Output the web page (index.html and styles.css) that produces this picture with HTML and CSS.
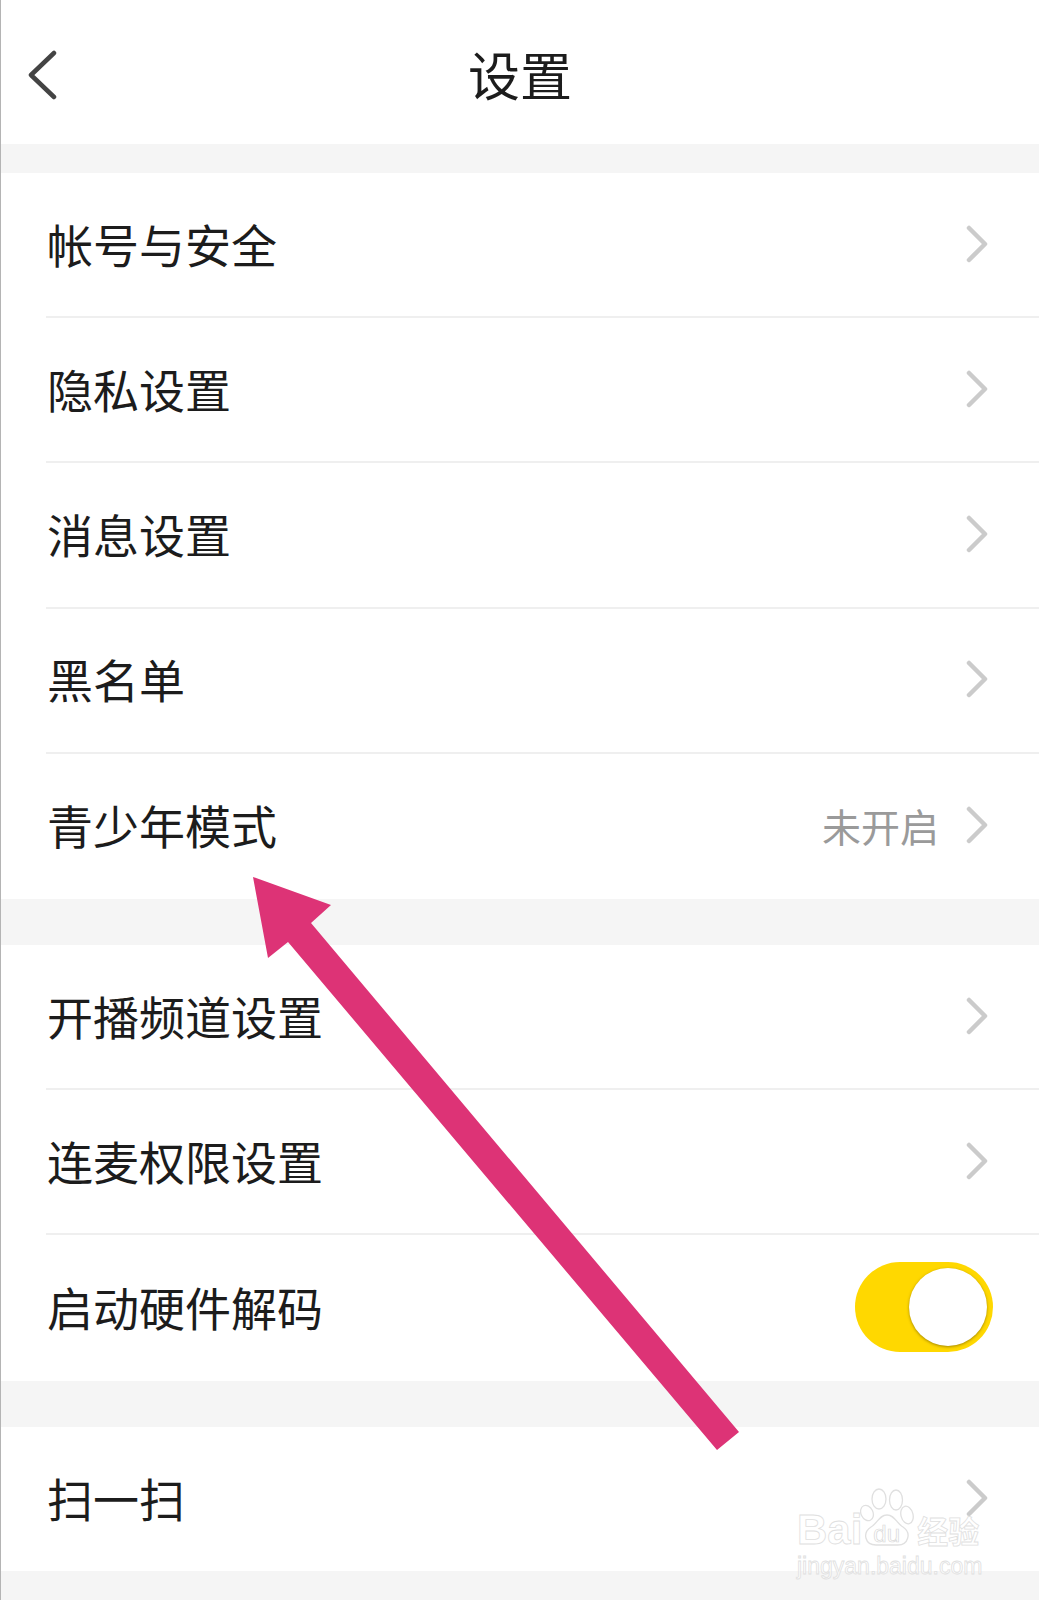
FILE: index.html
```html
<!DOCTYPE html>
<html lang="zh-CN">
<head>
  <meta charset="UTF-8" />
  <title>设置</title>
  <link rel="stylesheet" href="styles.css">
</head>
<body>
  <svg class="defs" width="0" height="0">
    <symbol id="chev" viewBox="0 0 24 38">
      <path d="M4 3 L20 19 L4 35" fill="none" stroke="#cbcbcb" stroke-width="4.5" stroke-linecap="round" stroke-linejoin="round" />
    </symbol>
  </svg>

  <div class="page">
    <!-- 顶部标题 -->
    <header class="topbar">
      <svg class="back" width="30" height="50" viewBox="0 0 30 50">
        <path d="M27 3 L4 25 L27 47" fill="none" stroke="#444" stroke-width="4.5" stroke-linecap="round" stroke-linejoin="round" />
      </svg>
      <h1>设置</h1>
    </header>

    <div class="gap gap-sm"></div>

    <section class="group">
      <div class="row"><span class="label">帐号与安全</span><svg class="chev"><use href="#chev" /></svg></div>
      <div class="row"><span class="label">隐私设置</span><svg class="chev"><use href="#chev" /></svg></div>
      <div class="row"><span class="label">消息设置</span><svg class="chev"><use href="#chev" /></svg></div>
      <div class="row"><span class="label">黑名单</span><svg class="chev"><use href="#chev" /></svg></div>
      <div class="row"><span class="label">青少年模式</span><span class="value">未开启</span><svg class="chev"><use href="#chev" /></svg></div>
    </section>

    <div class="gap"></div>

    <section class="group">
      <div class="row"><span class="label">开播频道设置</span><svg class="chev"><use href="#chev" /></svg></div>
      <div class="row"><span class="label">连麦权限设置</span><svg class="chev"><use href="#chev" /></svg></div>
      <div class="row row-switch"><span class="label">启动硬件解码</span><span class="switch"><span class="knob"></span></span></div>
    </section>

    <div class="gap"></div>

    <section class="group">
      <div class="row row-single"><span class="label">扫一扫</span><svg class="chev"><use href="#chev" /></svg></div>
    </section>

    <div class="footer-space"></div>

    <!-- 粉色箭头 -->
    <svg class="arrow" width="1039" height="1600" viewBox="0 0 1039 1600">
      <polygon points="253,877 331,905 311,923 739,1432 717,1450 288,942 268,958" fill="#dd3376" />
    </svg>

    <!-- 水印 -->
    <div class="watermark">
      <div class="wm-top">
        <span class="wm-bai">Bai</span>
        <span class="wm-paw">
          <svg width="54" height="60" viewBox="0 0 54 60">
            <g fill="#fff" fill-opacity="0.7" stroke="#e0e0e0" stroke-width="1.3">
              <ellipse cx="7" cy="26" rx="6" ry="8" transform="rotate(-25 7 26)" />
              <ellipse cx="19" cy="12" rx="7" ry="10" />
              <ellipse cx="36" cy="13" rx="6.5" ry="10" />
              <ellipse cx="47" cy="28" rx="6" ry="9" transform="rotate(-15 47 28)" />
              <path d="M27 28 C35 28 36 36 43 40 C52 46 48 58 38 58 L16 58 C5 58 2 46 11 40 C18 36 19 28 27 28 Z" />
            </g>
          </svg>
          <span class="wm-du">du</span>
        </span>
        <span class="wm-cn">经验</span>
      </div>
      <div class="wm-url">jingyan.baidu.com</div>
    </div>
  </div>
</body>
</html>
```

FILE: styles.css
```css
:root {
  --bg: #f5f5f5;
  --line: #efefef;
  --text: #1c1c1c;
}
* {
  box-sizing: border-box;
}
body {
  margin: 0;
  background: var(--bg);
  color: var(--text);
  font-family: "Noto Sans CJK SC", "Noto Sans", sans-serif;
}
.defs {
  position: absolute;
}
.page {
  position: relative;
  width: 1039px;
  height: 1600px;
  overflow: hidden;
  border-left: 1px solid #b4b4b4;
  display: flex;
  flex-direction: column;
}

/* topo */
.topbar {
  height: 144px;
  background: #fff;
  display: flex;
  align-items: center;
  justify-content: center;
  position: relative;
}
.topbar h1 {
  margin: 0;
  font-size: 52px;
  font-weight: 400;
  line-height: 1;
  padding-top: 4px;
}
.back {
  position: absolute;
  left: 26px;
  top: 50px;
}

/* separadores */
.gap {
  height: 46px;
  flex: none;
}
.gap-sm {
  height: 29px;
}
.footer-space {
  flex: 1;
}

/* listas */
.group {
  background: #fff;
  padding-left: 45px;
}
.row {
  height: 145.2px;
  display: flex;
  align-items: center;
  padding-right: 50px;
  padding-left: 1px;
  border-bottom: 2px solid var(--line);
}
.row:last-child {
  border-bottom: 0;
}
.row-single {
  height: 144px;
}
.label {
  flex: 1;
  font-size: 46px;
  line-height: 1;
  padding-bottom: 4px;
}
.value {
  font-size: 39px;
  line-height: 1;
  color: #9a9a9a;
  margin-right: 26px;
  padding-bottom: 2px;
}
.chev {
  width: 24px;
  height: 38px;
  flex: none;
  margin-bottom: 2px;
}

/* interruptor */
.row-switch {
  padding-right: 46px;
}
.switch {
  width: 138px;
  height: 90px;
  border-radius: 45px;
  background: #ffd800;
  display: flex;
  align-items: center;
  justify-content: flex-end;
  padding-right: 6px;
  margin-bottom: 1px;
}
.knob {
  width: 78px;
  height: 78px;
  border-radius: 50%;
  background: #fff;
  box-shadow: 0 1px 3px rgba(90, 70, 0, 0.55);
}

/* seta por cima */
.arrow {
  position: absolute;
  left: -1px;
  top: 0;
  pointer-events: none;
}

/* marca de agua */
.watermark {
  position: absolute;
  left: 796px;
  top: 1484px;
  width: 200px;
  font-family: "Liberation Sans", sans-serif;
  color: rgba(255, 255, 255, 0.75);
  -webkit-text-stroke: 0.8px #e0e0e0;
}
.wm-top {
  display: flex;
  align-items: flex-end;
  height: 65px;
  white-space: nowrap;
}
.wm-bai {
  font-size: 42px;
  font-weight: 700;
  line-height: 38px;
  flex: none;
}
.wm-paw {
  position: relative;
  width: 54px;
  height: 62px;
  flex: none;
  margin-left: -2px;
}
.wm-du {
  position: absolute;
  left: 13px;
  top: 35px;
  font-size: 24px;
  line-height: 24px;
  -webkit-text-stroke: 0.7px #d8d8d8;
}
.wm-cn {
  font-family: "Noto Sans CJK SC", sans-serif;
  font-size: 31px;
  font-weight: 700;
  line-height: 38px;
  margin-left: 3px;
  flex: none;
}
.wm-url {
  font-size: 23px;
  line-height: 26px;
  margin-top: 4px;
  white-space: nowrap;
}
```
